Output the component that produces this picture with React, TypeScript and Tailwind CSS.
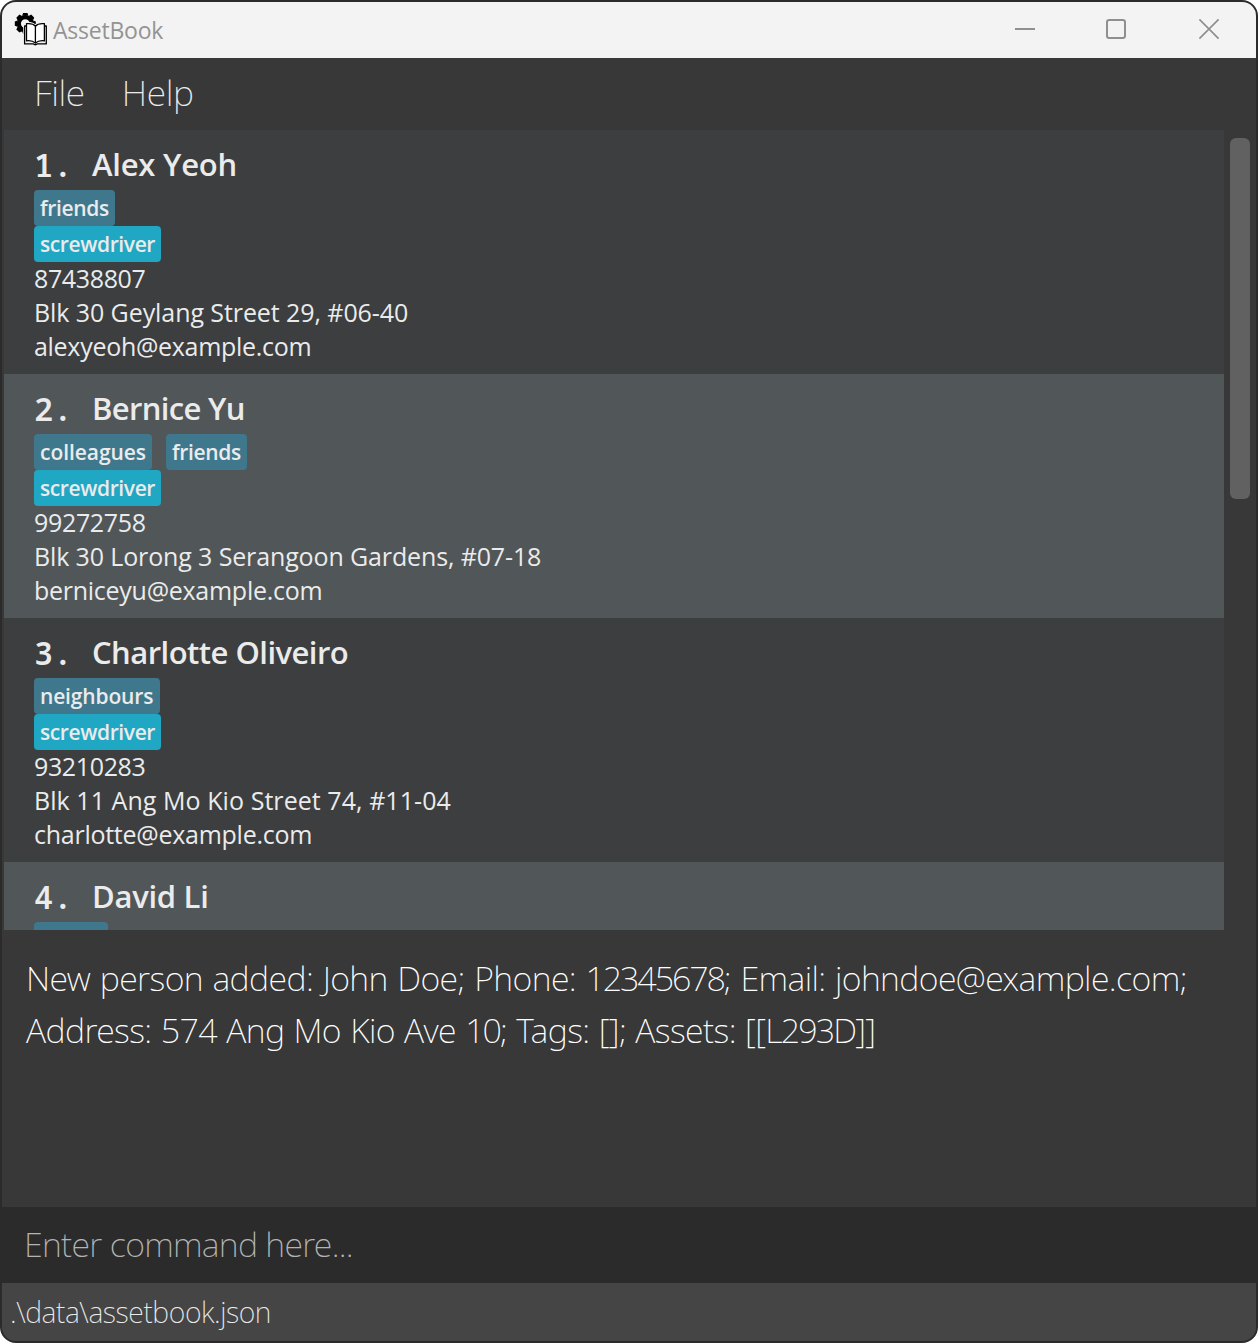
type Tag = { text: string; className: string };

type Person = {
  name: string;
  nameTracking: string;
  tags: Tag[];
  assets: string[];
  details: { text: string; tracking: string }[];
};

const friends: Tag = { text: "friends", className: "w-[81px] tracking-[-0.33px]" };

const people: Person[] = [
  {
    name: "Alex Yeoh",
    nameTracking: "tracking-[-0.22px]",
    tags: [friends],
    assets: ["screwdriver"],
    details: [
      { text: "87438807", tracking: "tracking-[-0.36px]" },
      { text: "Blk 30 Geylang Street 29, #06-40", tracking: "tracking-[-0.08px]" },
      { text: "alexyeoh@example.com", tracking: "tracking-[-0.29px]" },
    ],
  },
  {
    name: "Bernice Yu",
    nameTracking: "tracking-[-0.66px]",
    tags: [{ text: "colleagues", className: "w-[118px] tracking-[-0.05px]" }, friends],
    assets: ["screwdriver"],
    details: [
      { text: "99272758", tracking: "tracking-[-0.33px]" },
      { text: "Blk 30 Lorong 3 Serangoon Gardens, #07-18", tracking: "tracking-[-0.13px]" },
      { text: "berniceyu@example.com", tracking: "tracking-[-0.27px]" },
    ],
  },
  {
    name: "Charlotte Oliveiro",
    nameTracking: "tracking-[-0.53px]",
    tags: [{ text: "neighbours", className: "w-[126px] tracking-[-0.16px]" }],
    assets: ["screwdriver"],
    details: [
      { text: "93210283", tracking: "tracking-[-0.36px]" },
      { text: "Blk 11 Ang Mo Kio Street 74, #11-04", tracking: "tracking-[0.06px]" },
      { text: "charlotte@example.com", tracking: "tracking-[-0.26px]" },
    ],
  },
  {
    name: "David Li",
    nameTracking: "tracking-[-0.28px]",
    tags: [{ text: "", className: "w-[74px]" }],
    assets: [],
    details: [],
  },
];

const gearTeeth = [0, 45, 90, 135, 180, 225, 270, 315];

function AppIcon() {
  return (
    <svg width="34" height="34" viewBox="0 0 34 34" className="shrink-0">
      <g transform="translate(11.3 10.6)">
        <circle r="6.5" fill="none" stroke="#000" strokeWidth="4.2" />
        {gearTeeth.map((angle) => (
          <path key={angle} d="M-3.1 -7.8L-2.2 -10.5H2.2L3.1 -7.8Z" fill="#000" transform={`rotate(${angle})`} />
        ))}
      </g>
      <path
        d="M9.2 33V11.6L11.8 8.9C16 8.5 19.5 9.3 21.3 11.3C23.1 9.3 27 8.5 30.8 8.9L34 12.5V33Z"
        fill="#f3f3f3"
      />
      <g stroke="#000" strokeWidth="1.3" strokeLinejoin="round">
        <path d="M12.3 13H10.6V30.9H19.5C20.3 32 22.3 32 23.1 30.9H32.3V13H30.6" fill="none" />
        <path
          d="M21.4 13.2C19.5 10.9 16 10.3 12.5 10.7V27.8C16 27.4 19.4 28.1 21.4 30.1C23.4 28.1 27 27.4 30.4 27.8V10.7C27 10.3 23.5 10.9 21.4 13.2Z"
          fill="#fff"
        />
        <path d="M21.4 13.2V30" fill="none" />
      </g>
    </svg>
  );
}

function TitleBar() {
  return (
    <header className="flex h-14 shrink-0 items-center bg-[#f3f3f3] pl-[12px]">
      <AppIcon />
      <span className="ml-[5px] text-[23px] tracking-[-0.22px] text-[#939393]">AssetBook</span>
      <div className="mr-[36px] mb-[2px] ml-auto flex items-center text-[#8f8f8f]">
        <svg width="24" height="24" viewBox="0 0 24 24" fill="none" stroke="currentColor" strokeWidth="2">
          <path d="M2 12H22" />
        </svg>
        <svg
          width="22"
          height="24"
          viewBox="0 0 22 24"
          fill="none"
          stroke="currentColor"
          strokeWidth="2"
          className="mr-[70px] ml-[69px]"
        >
          <rect x="1" y="3" width="18" height="18" rx="2.2" />
        </svg>
        <svg width="22" height="24" viewBox="0 0 22 24" fill="none" stroke="currentColor" strokeWidth="1.7">
          <path d="M1.4 2.4L20.6 21.6M20.6 2.4L1.4 21.6" />
        </svg>
      </div>
    </header>
  );
}

function PersonCard({ person, index }: { person: Person; index: number }) {
  return (
    <li
      className={`h-[244px] shrink-0 pt-[10px] pl-[30px] text-[25px] leading-[34px] text-[#ebebeb] ${
        index % 2 === 0 ? "bg-[#3c3e3f]" : "bg-[#515658]"
      }`}
    >
      <div className="flex h-[50px] items-center text-[31px] font-[560]">
        <span className="w-[58px] font-['Noto_Sans_Mono','Roboto_Mono','JetBrains_Mono',monospace] text-[32px] font-[560]">
          {index + 1}.
        </span>
        <span className={`pb-[2px] ${person.nameTracking}`}>{person.name}</span>
      </div>
      <div className="flex gap-[14px] text-[21px] font-[560]">
        {person.tags.map((tag) => (
          <span
            key={tag.text}
            className={`h-9 rounded-[4px] bg-[#3f788d] pl-[6px] leading-9 ${tag.className}`}
          >
            {tag.text}
          </span>
        ))}
      </div>
      {person.assets.map((asset) => (
        <div
          key={asset}
          className="mb-[-1px] h-9 w-[127px] rounded-[4px] bg-[#1fa7c3] pl-[6px] text-[21px] leading-9 font-[560] tracking-[-0.39px]"
        >
          {asset}
        </div>
      ))}
      {person.details.map((detail) => (
        <p key={detail.text} className={detail.tracking}>
          {detail.text}
        </p>
      ))}
    </li>
  );
}

export default function App() {
  return (
    <div className="h-[1343px] w-[1258px] bg-white font-['Open_Sans','Noto_Sans',sans-serif]">
      <div className="flex h-full flex-col overflow-hidden rounded-[16px] border-2 border-[#2b2b2b] bg-[#383838] whitespace-nowrap">
        <TitleBar />
        <nav className="flex h-[72px] shrink-0 items-center gap-[37px] pb-[2px] pl-[32px] font-['Noto_Sans'] text-[35.5px] font-[250] tracking-[-0.4px] text-[#ebebeb]">
          <span>File</span>
          <span>Help</span>
        </nav>
        <main className="flex h-[800px] shrink-0 overflow-hidden pl-[2px]">
          <ul className="flex h-full w-[1220px] flex-col overflow-hidden">
            {people.map((person, index) => (
              <PersonCard key={person.name} person={person} index={index} />
            ))}
          </ul>
          <div className="mt-2 ml-[6px] h-[361px] w-5 rounded-[6px] bg-[#616161]" />
        </main>
        <section className="h-[277px] shrink-0 pt-[22px] pl-[24px] font-['Noto_Sans'] text-[34px] leading-[52px] font-extralight tracking-[-0.59px] text-white">
          <p className="[word-spacing:1.2px]">
            New person added: John Doe; Phone: <span className="tracking-[-2.1px]">12345678</span>; Email:
            johndoe@example.com;
          </p>
          <p className="[word-spacing:0.9px]">
            Address: 574 Ang Mo Kio Ave <span className="tracking-[-2px]">10</span>; Tags: []; Assets: [[
            <span className="tracking-[-1.9px]">L293D</span>]]
          </p>
        </section>
        <div className="flex h-[76px] shrink-0 items-center bg-[#2b2b2b] pb-[2px] pl-[22px] font-['Noto_Sans'] text-[34px] font-extralight tracking-[-0.72px] text-[#b4b4b4]">
          Enter command here...
        </div>
        <footer className="flex flex-1 items-center bg-[#454545] pt-[1px] pl-[8px] font-['Noto_Sans'] text-[28.5px] font-extralight tracking-[-0.42px] text-[#ebebeb]">
          .\data\assetbook.json
        </footer>
      </div>
    </div>
  );
}
